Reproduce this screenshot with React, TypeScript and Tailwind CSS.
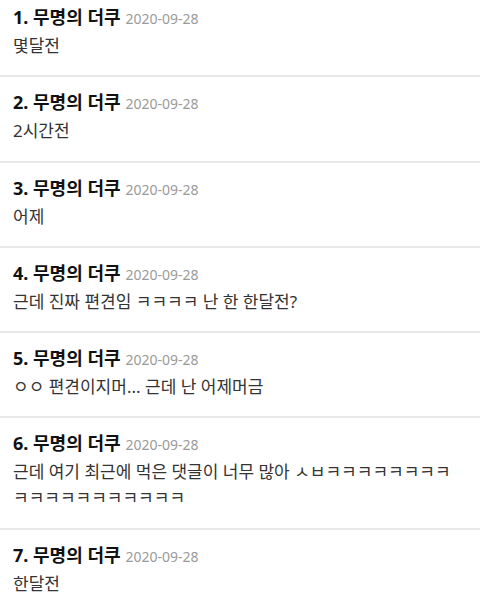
const comments = [
  { no: 1, body: "몇달전" },
  { no: 2, body: "2시간전" },
  { no: 3, body: "어제" },
  { no: 4, body: "근데 진짜 편견임 ㅋㅋㅋㅋ 난 한 한달전?" },
  { no: 5, body: "ㅇㅇ 편견이지머... 근데 난 어제머금" },
  {
    no: 6,
    body: "근데 여기 최근에 먹은 댓글이 너무 많아 ㅅㅂㅋㅋㅋㅋㅋㅋㅋㅋ ㅋㅋㅋㅋㅋㅋㅋㅋㅋㅋㅋ",
  },
  { no: 7, body: "한달전" },
];

const CommentRow = ({ no, body }: { no: number; body: string }) => {
  return (
    <li className="border-b-2 border-[#e8e8e8] px-[13px] pt-[13px] pb-[16.25px]">
      <div className="flex h-[24px] items-baseline gap-[5px] leading-[24px]">
        <span className="text-[18px] font-bold text-[#111]">
          {no}. 무명의 더쿠
        </span>
        <span className="text-[14px] text-[#9a9a9a]">2020-09-28</span>
      </div>
      <p className="mt-[4px] text-[17px] leading-[26px] text-[#333]">{body}</p>
    </li>
  );
};

const App = () => {
  return (
    <div
      className="h-[611px] w-[480px] overflow-hidden bg-white"
      style={{ fontFamily: '"Noto Sans", "Noto Sans CJK KR", sans-serif' }}
    >
      <ul className="-mt-[8px]">
        {comments.map((c) => (
          <CommentRow key={c.no} no={c.no} body={c.body} />
        ))}
      </ul>
    </div>
  );
};

export default App;
